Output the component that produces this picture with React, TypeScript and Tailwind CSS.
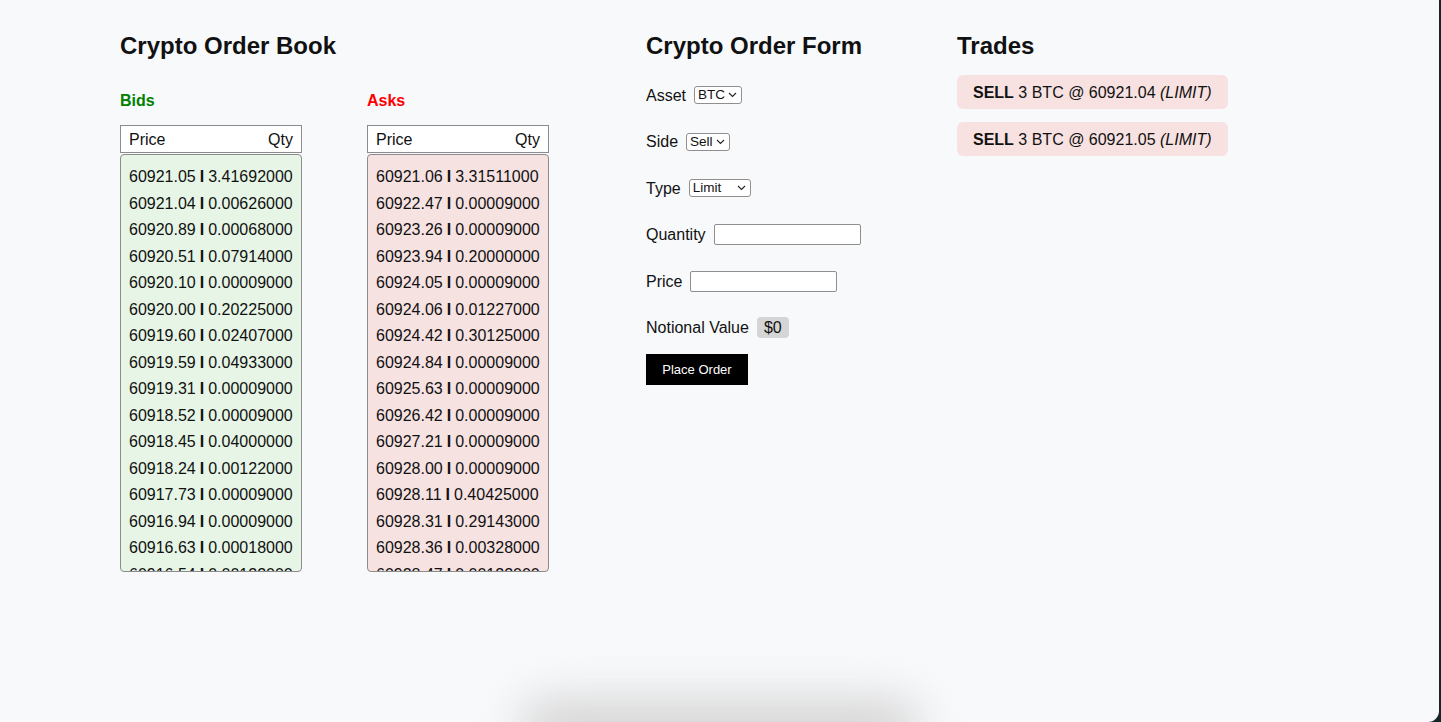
import { ReactNode } from 'react'

const bids: [string, string][] = [
  ['60921.05', '3.41692000'],
  ['60921.04', '0.00626000'],
  ['60920.89', '0.00068000'],
  ['60920.51', '0.07914000'],
  ['60920.10', '0.00009000'],
  ['60920.00', '0.20225000'],
  ['60919.60', '0.02407000'],
  ['60919.59', '0.04933000'],
  ['60919.31', '0.00009000'],
  ['60918.52', '0.00009000'],
  ['60918.45', '0.04000000'],
  ['60918.24', '0.00122000'],
  ['60917.73', '0.00009000'],
  ['60916.94', '0.00009000'],
  ['60916.63', '0.00018000'],
  ['60916.54', '0.00122000'],
]

const asks: [string, string][] = [
  ['60921.06', '3.31511000'],
  ['60922.47', '0.00009000'],
  ['60923.26', '0.00009000'],
  ['60923.94', '0.20000000'],
  ['60924.05', '0.00009000'],
  ['60924.06', '0.01227000'],
  ['60924.42', '0.30125000'],
  ['60924.84', '0.00009000'],
  ['60925.63', '0.00009000'],
  ['60926.42', '0.00009000'],
  ['60927.21', '0.00009000'],
  ['60928.00', '0.00009000'],
  ['60928.11', '0.40425000'],
  ['60928.31', '0.29143000'],
  ['60928.36', '0.00328000'],
  ['60928.47', '0.00122000'],
]

const trades = ['60921.04', '60921.05']

const Title = ({ children }: { children: ReactNode }) => (
  <h2 className="h-[28px] text-[24px] leading-[28px] font-bold text-[#111]">{children}</h2>
)

const Side = ({ label, color, bg, rows }: { label: string; color: string; bg: string; rows: [string, string][] }) => (
  <div className="flex w-[182px] flex-col">
    <h3 className={`mt-[32px] h-[18px] text-[16px] leading-[18px] font-bold ${color}`}>{label}</h3>
    <div className="mt-[15px] flex h-[28px] items-center justify-between border border-[#8c8c8c] bg-white px-[8px] pt-px text-[16px]">
      <span>Price</span>
      <span>Qty</span>
    </div>
    <div className={`mt-px h-[418px] overflow-hidden rounded-[4px] border border-[#8c8c8c] pt-[9px] pl-[8px] ${bg}`}>
      {rows.map(([p, q]) => (
        <div key={p} className="flex h-[26.5px] items-center text-[16px] whitespace-nowrap">
          {p} <b className="mx-[4px]">I</b> {q}
        </div>
      ))}
    </div>
  </div>
)

const Select = ({ value, width }: { value: string; width: string }) => (
  <div className={`relative flex h-[18px] items-center rounded-[3px] border border-[#8f8f8f] bg-white pl-[3px] text-[13.5px] leading-none ${width}`}>
    {value}
    <svg className="absolute right-[4px]" width="9" height="6" viewBox="0 0 9 6" fill="none">
      <path d="M1 1l3.5 3.5L8 1" stroke="#222" strokeWidth="1.1" />
    </svg>
  </div>
)

const Row = ({ label, children }: { label: string; children: ReactNode }) => (
  <div className="flex h-[20px] items-center gap-[8px] text-[16px]">
    <span className="pt-px">{label}</span>
    {children}
  </div>
)

export default function App() {
  return (
    <div className="h-[722px] w-full bg-[#15262a]" style={{ fontFamily: '"Liberation Sans", Arial, sans-serif' }}>
      <div className="relative h-[722px] w-[1439px] overflow-hidden rounded-br-[11px] bg-[#f8f9fb] text-[#111]">
        <div className="flex pt-[32px] pl-[120px]">
          <section className="w-[526px]">
            <Title>Crypto Order Book</Title>
            <div className="flex gap-[65px]">
              <Side label="Bids" color="text-[#008000]" bg="bg-[#e6f5e6]" rows={bids} />
              <Side label="Asks" color="text-[#ff0000]" bg="bg-[#f7e2e2]" rows={asks} />
            </div>
          </section>

          <section className="w-[311px]">
            <Title>Crypto Order Form</Title>
            <div className="mt-[25px] flex flex-col gap-[26.5px]">
              <Row label="Asset">
                <Select value="BTC" width="w-[48px]" />
              </Row>
              <Row label="Side">
                <Select value="Sell" width="w-[44px]" />
              </Row>
              <Row label="Type">
                <Select value="Limit" width="w-[62px]" />
              </Row>
              <Row label="Quantity">
                <input className="h-[21px] w-[147px] rounded-[2px] border border-[#8f8f8f] bg-white" />
              </Row>
              <Row label="Price">
                <input className="h-[21px] w-[147px] rounded-[2px] border border-[#8f8f8f] bg-white" />
              </Row>
              <Row label="Notional Value">
                <span className="flex h-[21px] items-center rounded-[4px] bg-[#d5d5d5] px-[7px] pt-px">$0</span>
              </Row>
            </div>
            <button className="mt-[16.5px] h-[31px] w-[102px] bg-black text-[13px] text-white">Place Order</button>
          </section>

          <section>
            <Title>Trades</Title>
            <div className="mt-[15px] flex flex-col gap-[13px]">
              {trades.map((t) => (
                <div key={t} className="flex h-[34px] w-[271px] items-center rounded-[6px] bg-[#f7e1e1] px-[16px] pt-px text-[16px]">
                  <b>SELL</b>&nbsp;3 BTC @ {t}&nbsp;<i>(LIMIT)</i>
                </div>
              ))}
            </div>
          </section>
        </div>

        <div className="absolute -bottom-[36px] left-[520px] h-[60px] w-[400px] rounded-full bg-[#d6d6d6] blur-[22px]" />
      </div>
    </div>
  )
}
